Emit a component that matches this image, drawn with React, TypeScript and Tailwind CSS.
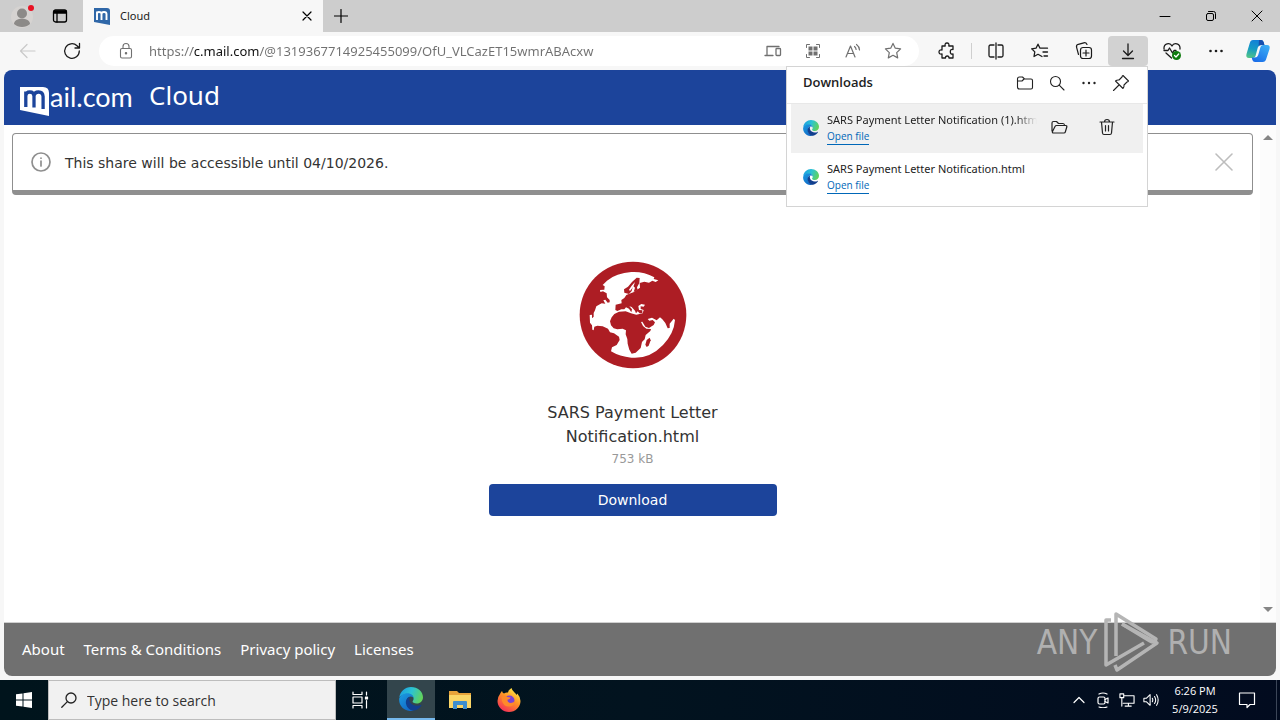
import React from 'react';
import type { ReactNode } from 'react';

const ui = "font-['Open_Sans','Noto_Sans',sans-serif]";
const noto = "font-['Noto_Sans',sans-serif]";
const web = "font-['DejaVu_Sans',sans-serif]";

type IconProps = { size?: number; box?: number; stroke?: number; className?: string; children: ReactNode };

function Icon({ size = 20, box = 20, stroke = 1.2, className = '', children }: IconProps) {
  return (
    <svg
      width={size}
      height={size}
      viewBox={`0 0 ${box} ${box}`}
      fill="none"
      stroke="currentColor"
      strokeWidth={stroke}
      strokeLinecap="round"
      strokeLinejoin="round"
      className={`shrink-0 ${className}`}
      aria-hidden="true"
    >
      {children}
    </svg>
  );
}

const starPath = 'M10 2.4l2.3 4.8 5.3.7-3.9 3.7 1 5.3L10 14.3l-4.7 2.6 1-5.3-3.9-3.7 5.3-.7z';

function EdgeLogo({ size, id }: { size: number; id: string }) {
  return (
    <svg width={size} height={size} viewBox="0 0 24 24" className="shrink-0" aria-hidden="true">
      <defs>
        <linearGradient id={`${id}-a`} x1="0" y1="0.2" x2="1" y2="0.5">
          <stop offset="0" stopColor="#1b9de2" />
          <stop offset="0.5" stopColor="#2cc3d2" />
          <stop offset="1" stopColor="#62d35a" />
        </linearGradient>
        <linearGradient id={`${id}-b`} x1="0" y1="0" x2="0.7" y2="1">
          <stop offset="0" stopColor="#1b9de2" />
          <stop offset="1" stopColor="#1267c4" />
        </linearGradient>
      </defs>
      <path fill={`url(#${id}-a)`} d="M.3 10.5C1.2 4.4 6.100 0 12 0c6.800 0 12 4.700 12 10.200 0 3.600-2.700 6.300-6.200 6.300-2.900 0-4.200-1.200-4.200-2 0-.7 1-1.100 1-2.800C14.600 8.700 12 7 8.600 7 4.800 7 2 8.400.3 10.500z" />
      <path fill={`url(#${id}-b)`} d="M.2 11.600C1.300 8.500 4.300 6.300 8.500 6.300c3.400 0 6.100 2.100 6.100 5.200-.2-1-1.500-1.900-2.900-1.900-2.800 0-4.500 2.600-4.200 5.500.4 4.600 4 8.400 7.500 8.500-7.900 2.200-15.600-3.900-14.800-12z" />
      <path fill="#123f8e" d="M10.900 9.700c-2.900 1-4.600 4-3.800 7.200.9 4 4.400 6.900 8 6.700 3.100-.8 5.700-2.700 7.300-5.200.3-.5-.2-.8-.7-.5-3.900 2-10.600.4-11.400-4.900-.2-1.300.1-2.400.6-3.300z" />
    </svg>
  );
}

function Tool({ label, active = false, children }: { label: string; active?: boolean; children: ReactNode }) {
  return (
    <button
      type="button"
      aria-label={label}
      className={`flex h-[30px] w-10 shrink-0 items-center justify-center rounded ${active ? 'bg-[#d2d2d2]' : ''}`}
    >
      {children}
    </button>
  );
}

function TabStrip() {
  return (
    <div className="flex h-8 shrink-0 items-stretch bg-[#cdcdcd]">
      <button type="button" aria-label="Profile" className="flex w-11 items-center justify-center">
        <svg width="28" height="28" viewBox="0 0 28 28" aria-hidden="true">
          <circle cx="14" cy="15" r="11" fill="#d6d3d1" />
          <circle cx="14" cy="11.500" r="5" fill="#8c8a88" />
          <path d="M6 22c0-7 16-7 16 0-4 4-12 4-16 0z" fill="#8c8a88" />
          <circle cx="23" cy="6" r="3" fill="#e81123" />
        </svg>
      </button>
      <button type="button" aria-label="Tab actions" className="flex w-8 items-center justify-center">
        <Icon size={16} box={16} stroke={1.3}>
          <rect x="1.500" y="2" width="13" height="12" rx="2" />
          <path d="M2 3h12v2H2z" fill="currentColor" />
          <path d="M5 5v9" />
        </Icon>
      </button>
      <div className="ml-[7px] flex w-60 items-center bg-[#f7f7f7] pl-[11px] pr-2">
        <svg width="16" height="17" viewBox="0 0 16 17" className="shrink-0" aria-hidden="true">
          <path d="M0 0h13q3 0 3 3v14L0 14z" fill="#2f67a8" />
          <path d="M3 12V3.500M3 5.500q0-1.500 2-1.500t2.500 1.500V12M7.500 6q0-2 2.500-2t2.500 2v6" stroke="#fff" strokeWidth="1.900" fill="none" />
        </svg>
        <span className={`ml-2.5 flex-1 text-[11px] text-[#1b1b1b] ${noto}`}>Cloud</span>
        <button type="button" aria-label="Close tab" className="flex size-4 items-center justify-center">
          <Icon size={10} box={10}>
            <path d="M1 1l8 8M9 1l-8 8" />
          </Icon>
        </button>
      </div>
      <button type="button" aria-label="New tab" className="flex w-9 items-center justify-center">
        <Icon size={14} box={14}>
          <path d="M7 .5v13M.5 7h13" />
        </Icon>
      </button>
      <div className="flex-1" />
      <button type="button" aria-label="Minimize" className="flex w-[46px] items-center justify-center">
        <Icon size={12} box={12} stroke={1}>
          <path d="M1 6.500h10" />
        </Icon>
      </button>
      <button type="button" aria-label="Restore" className="flex w-[46px] items-center justify-center">
        <Icon size={12} box={12} stroke={1}>
          <rect x="1.500" y="3.500" width="7" height="7" rx="1.500" />
          <path d="M3.500 1.500h5q2 0 2 2v5" />
        </Icon>
      </button>
      <button type="button" aria-label="Close" className="flex w-[46px] items-center justify-center">
        <Icon size={12} box={12} stroke={1}>
          <path d="M1 1l10 10M11 1L1 11" />
        </Icon>
      </button>
    </div>
  );
}

function Toolbar() {
  return (
    <div className="flex h-[38px] shrink-0 items-center bg-[#f7f7f7] pr-1">
      <button type="button" aria-label="Back" className="flex w-14 items-center justify-center text-[#c9c9c9]">
        <Icon size={18} box={18}>
          <path d="M16 9H2M8 2.500L1.500 9 8 15.500" />
        </Icon>
      </button>
      <button type="button" aria-label="Refresh" className="mr-[11px] flex w-8 items-center justify-center text-[#1b1b1b]">
        <Icon size={18} box={18} stroke={1.3}>
          <path d="M16.300 9A7.300 7.300 0 1 1 14 3.700L16.300 6M16.500 1.500V6h-4.500" />
        </Icon>
      </button>
      <div className="flex h-[30px] flex-1 items-center rounded-full bg-white pl-[18px] pr-1.5 text-[#707070]">
        <Icon size={18} box={18} stroke={1.1}>
          <rect x="3.500" y="6.500" width="11" height="9.500" rx="1.500" />
          <path d="M6 6.500V4.500q0-3 3-3t3 3v2" />
          <circle cx="9" cy="11.300" r=".7" fill="currentColor" />
        </Icon>
        <input
          aria-label="Address"
          defaultValue="https://c.mail.com/@1319367714925455099/OfU_VLCazET15wmrABAcxw"
          className={`ml-3.5 min-w-0 flex-1 bg-[linear-gradient(to_right,#707070_44px,#111_44px,#111_110px,#707070_110px)] bg-clip-text pt-0.5 text-[13px] text-transparent outline-none ${noto}`}
        />
        <Tool label="Send to devices">
          <Icon size={18} box={18} stroke={1.3}>
            <path d="M3 12.500V4.500h12M1 13.500h8" />
            <rect x="12" y="6.500" width="4.500" height="7" rx=".8" />
          </Icon>
        </Tool>
        <Tool label="QR code">
          <Icon size={18} box={18} stroke={1}>
            <path d="M2.500 5.500v-3h3M12.500 2.500h3v3M15.500 12.500v3h-3M5.500 15.500h-3v-3" />
            <path d="M4.500 4.500h4v4h-4zM9.500 4.500h4v4h-4zM4.500 9.500h4v4h-4zM9.500 9.500h4v4h-4z" fill="currentColor" stroke="none" />
          </Icon>
        </Tool>
        <Tool label="Read aloud">
          <Icon size={18} box={18} stroke={1.2}>
            <path d="M2 15L6.500 4 11 15M3.500 11.500h6M10.500 4.500q1.500 1.200 1.600 3M12.500 2.500q2.800 2 3 5.500" />
          </Icon>
        </Tool>
        <Tool label="Add to favorites">
          <Icon size={20}><path d={starPath} /></Icon>
        </Tool>
      </div>
      <div className="flex items-center gap-1 pl-2 text-[#1b1b1b]">
        <Tool label="Extensions">
          <Icon size={20} stroke={1.3}>
            <path d="M5 5h3.200Q7.500 2 10 2t1.800 3H16v3.500q-2.700-.6-2.700 2.200T16 13v4h-4q0-2-1.800-2T8.500 17H5v-4Q2 13.500 2 11t3-2z" />
          </Icon>
        </Tool>
        <div className="h-4 w-px bg-[#cfcfcf]" />
        <Tool label="Split screen">
          <Icon size={18} box={18} stroke={1.3}>
            <path d="M7 3H3.500Q2 3 2 4.500v9Q2 15 3.500 15H7M11 3h3.500Q16 3 16 4.500v9q0 1.500-1.500 1.500H11M9 1v16" />
          </Icon>
        </Tool>
        <Tool label="Favorites">
          <Icon size={20} stroke={1.3}>
            <path d="M12 15.500L8 13.300l-4 2.200.8-4.600L1.700 7.800l4.300-.6L8 3.200l2 4h7.500M13 11h4.500M14 15h3.500" />
          </Icon>
        </Tool>
        <Tool label="Collections">
          <Icon size={20} stroke={1.2}>
            <rect x="6.500" y="6.500" width="11" height="11" rx="2.500" />
            <path d="M12 9v6M9 12h6M4.500 13.500L2.600 6.300Q2 4 4.300 3.300l5.500-1.500Q12 1.300 13 3.500" />
          </Icon>
        </Tool>
        <Tool label="Downloads" active>
          <Icon size={20} stroke={1.3}>
            <path d="M10 3v11M5.500 10l4.500 4.500 4.500-4.500M4.500 17.500h11" />
          </Icon>
        </Tool>
        <Tool label="Browser essentials">
          <Icon size={20} stroke={1.3}>
            <path d="M2 8C1.500 2.500 8 1 10 5c2-4 8.500-2.500 8 3M2 9.500h4l1.500-2.500 3 5 1.500-2.500h2M4 12l5.500 5" />
            <circle cx="14.500" cy="14.500" r="4.500" fill="#0f7b0f" stroke="none" />
            <path d="M12.500 14.500l1.500 1.500 2.700-3" stroke="#fff" />
          </Icon>
        </Tool>
        <Tool label="Settings and more">
          <Icon size={18} box={18} stroke={0}>
            <g fill="currentColor">
              <circle cx="3.500" cy="9" r="1.300" />
              <circle cx="9" cy="9" r="1.300" />
              <circle cx="14.500" cy="9" r="1.300" />
            </g>
          </Icon>
        </Tool>
        <button type="button" aria-label="Copilot" className="flex w-9 justify-center">
          <svg width="26" height="26" viewBox="0 0 26 26" aria-hidden="true">
            <defs>
              <linearGradient id="cp1" x1="0.500" y1="0" x2="0.300" y2="1">
                <stop offset="0" stopColor="#1280d8" />
                <stop offset="0.500" stopColor="#159bc4" />
                <stop offset="1" stopColor="#52c487" />
              </linearGradient>
              <linearGradient id="cp2" x1="0.800" y1="0" x2="0.200" y2="1">
                <stop offset="0" stopColor="#3baef5" />
                <stop offset="1" stopColor="#1a6ce8" />
              </linearGradient>
            </defs>
            <path d="M8 2h8q2 0 2.600 2l.8 3h-3.200q-2.600 0-3.400 2.600L10.500 18q-.6 2-2.600 2H4q-3.500 0-2.500-4L4.800 5Q5.500 2 8 2z" fill="url(#cp1)" />
            <path d="M17.800 24H10q-2 0-2.600-2l-.7-2.500h3.100q2.600 0 3.400-2.600L15.500 9q.6-2 2.600-2H22q3.500 0 2.500 4l-3.300 10q-.8 3-3.400 3z" fill="url(#cp2)" />
            <path d="M14 2h2q2 0 2.600 2l.8 3h-3.200q-1.700 0-2.600 1z" fill="#174fae" />
          </svg>
        </button>
      </div>
    </div>
  );
}

const downloads = [
  { name: 'SARS Payment Letter Notification (1).html', hovered: true },
  { name: 'SARS Payment Letter Notification.html', hovered: false },
];

function DownloadsPanel() {
  return (
    <section
      aria-label="Downloads"
      className="absolute right-[132px] top-[66px] z-10 w-[362px] border border-[#d4d4d4] bg-white pb-1 text-[#222]"
    >
      <header className="flex h-[37px] items-center border-b border-[#e8e8e8] pb-1 pl-4 pr-2.5">
        <h2 className="flex-1 text-[13px] font-semibold">Downloads</h2>
        <button type="button" aria-label="Open downloads folder" className="flex w-8 justify-center">
          <Icon size={18} box={18} stroke={1.1}>
            <path d="M1.500 5q0-2 2-2h3l2 2H15q1.500 0 1.500 1.500v7Q16.500 15 15 15H3.500q-2 0-2-2zM1.500 7H6l2-2" />
          </Icon>
        </button>
        <button type="button" aria-label="Search downloads" className="flex w-8 justify-center">
          <Icon size={16} box={16} stroke={1.1}>
            <circle cx="6.500" cy="6.500" r="5" />
            <path d="M10.200 10.200L15 15" />
          </Icon>
        </button>
        <button type="button" aria-label="More options" className="flex w-8 justify-center">
          <Icon size={18} box={18} stroke={0}>
            <g fill="currentColor">
              <circle cx="3.500" cy="9" r="1.200" />
              <circle cx="9" cy="9" r="1.200" />
              <circle cx="14.500" cy="9" r="1.200" />
            </g>
          </Icon>
        </button>
        <button type="button" aria-label="Pin downloads" className="flex w-8 justify-center">
          <Icon size={18} box={18} stroke={1.1}>
            <path d="M11 1.500L16.500 7q-.5 1-1.500 1l-3 3q.3 2-1 3.500L3.500 7Q5 5.700 7 6l3-3q0-1 1-1.500zM7 11l-5.500 5.500" />
          </Icon>
        </button>
      </header>
      <ul className="px-1">
        {downloads.map((item, i) => (
          <li key={item.name} className={`flex h-[49px] items-center pb-px pl-3 ${item.hovered ? 'bg-[#f0f0f0]' : ''}`}>
            <EdgeLogo size={16} id={`dl${i}`} />
            <div className="ml-2 w-[210px] overflow-hidden">
              <div
                className={`whitespace-nowrap text-[11px] leading-4 ${noto} ${
                  item.hovered ? '[mask-image:linear-gradient(to_right,black_90%,transparent)]' : ''
                }`}
              >
                {item.name}
              </div>
              <a href="#open" className="block w-fit border-b border-[#0067b8] text-[10px] leading-4 text-[#0067b8]">
                Open file
              </a>
            </div>
            {item.hovered && (
              <div className="flex flex-1 pb-0.5">
                <button type="button" aria-label="Show in folder" className="flex w-11 justify-center">
                  <Icon size={18} box={18} stroke={1.2}>
                    <path d="M2 13V5q0-1.500 1.500-1.500h3l2 2H13q1.500 0 1.500 2M3.500 15H14q1 0 1.300-1l1.500-5q.3-1.500-1-1.500H6.500q-1 0-1.500 1l-2.500 5Q2 15 3.500 15z" />
                  </Icon>
                </button>
                <button type="button" aria-label="Delete file" className="ml-1 flex w-11 justify-center">
                  <Icon size={18} box={18} stroke={1.2}>
                    <path d="M2 4h14M6.500 4q0-2.500 2.500-2.500T11.500 4M3.500 4l1 11q.2 1.500 1.500 1.500h6q1.300 0 1.500-1.500l1-11M7.500 7.500v5.500M10.500 7.500v5.500" />
                  </Icon>
                </button>
              </div>
            )}
          </li>
        ))}
      </ul>
    </section>
  );
}

function MailLogo() {
  return (
    <svg width="113" height="32" viewBox="0 0 113 32" className="overflow-visible" role="img" aria-label="mail.com">
      <path d="M0 2h23q6 0 6 6v23L0 25z" fill="#fff" />
      <path
        d="M5.800 22V6.500M5.800 11q0-4 4-4t4.200 4V22.500M14 11q.4-4 4.600-4t4.500 4.500V24"
        stroke="#1c449b"
        strokeWidth="3.300"
        fill="none"
      />
      <text x="30" y="22" fontSize="27" fill="#fff" fontFamily="Lato, sans-serif">ail.com</text>
    </svg>
  );
}

function Globe() {
  return (
    <svg width="108" height="108" viewBox="298 33 324 324" aria-hidden="true">
      <circle cx="460" cy="195" r="160" fill="#ad1d24" />
      <path
        fill="#fff"
        d="M369 105L382 92Q410 69 455 66Q492 64 524 82L522 87L536 91L528 96L518 92L508 98L494 95L480 99L481 113L471 120L463 126L453 130L440 135L434 144L425 150L426 160L408 164L407 180L413 183L425 178L434 178L439 172L448 176L455 187L457 178L449 169L456 171L466 182L469 190L474 184L480 190L488 189L488 181L478 180L476 168L485 162L496 164L492 170L483 169L483 177L492 180L489 190L470 194L454 190L438 184L418 185L404 192L396 202L391 214L394 226L402 235L413 238L429 236L439 241L438 253L443 267L444 281L449 299L456 311L468 308L483 294L487 276L495 268L498 255L512 243L514 237L500 236L490 228L484 216L488 215L497 230L508 234L522 225L526 217L519 210L509 212L504 207L517 203L531 211L541 202L548 208L557 219L564 235L570 234L570 221L582 206L586 210Q583 251 550 285Q509 328 455 323Q420 320 394 304L397 292L411 285L420 270L418 260L403 250L391 247L385 236L369 229L353 227L344 230L342 241L338 239L337 226L331 218L330 195L337 194L337 205L342 200L342 189L346 181L350 169L366 160L377 161L371 151L377 149L384 158L390 157L390 150L382 142L381 130L370 124L362 126L361 120L374 119L375 109Z"
      />
      <path fill="#ad1d24" d="M471 83L480 84L479 99L472 112L474 120L462 126L466 113L460 108L456 123L448 132L434 128L433 118L445 110L457 96Z" />
      <path fill="#fff" d="M466 96L461 110L451 123L448 119L456 107Z" />
      <path fill="#ad1d24" d="M510 263L513 271L507 287L501 291L497 284L501 270Z" />
    </svg>
  );
}

function Watermark() {
  return (
    <div
      aria-hidden="true"
      className="pointer-events-none absolute bottom-[46px] right-12 flex items-center gap-1.5 font-['DejaVu_Sans_Condensed','DejaVu_Sans',sans-serif] text-[33px] leading-none text-[#b0b0b0]"
    >
      <span>ANY</span>
      <svg width="58" height="64" viewBox="0 0 58 64" fill="none" stroke="#b5b5b5" strokeWidth="3.500" strokeLinejoin="round">
        <path d="M13 46V4l40 25q-1 5-6 2L19 14" />
        <path d="M8 10H3v45l38-22M19 14l35 19L14 60l-2-5" />
      </svg>
      <span>RUN</span>
    </div>
  );
}

function Page() {
  return (
    <div className={`mx-1 mb-1 flex flex-1 flex-col overflow-hidden rounded-lg bg-white ${web}`}>
      <header className="flex h-[55px] shrink-0 items-center bg-[#1c449b] px-4 text-white">
        <div className="pt-1.5"><MailLogo /></div>
        <h1 className={`ml-4 pb-1.5 text-[26px] leading-10 ${noto}`}>Cloud</h1>
      </header>
      <div className="flex flex-1">
        <main className="flex-1 pl-2 pr-[7px] pt-2">
          <div
            role="status"
            className="flex h-[62px] items-center rounded border border-b-[5px] border-[#8f8f8f] px-[18px] text-sm text-[#333]"
          >
            <Icon size={20} box={20} stroke={1.700} className="text-[#8f8f8f]">
              <circle cx="10" cy="10" r="9" />
              <path d="M10 9v5M10 6v.2" />
            </Icon>
            <p className="ml-3.5 flex-1 pt-0.5">This share will be accessible until 04/10/2026.</p>
            <button type="button" aria-label="Dismiss" className="text-[#bdbdbd]">
              <Icon size={20} box={20} stroke={1.600}>
                <path d="M2 2l16 16M18 2L2 18" />
              </Icon>
            </button>
          </div>
          <section className="mx-auto flex w-72 flex-col items-center pt-[66px] text-center">
            <Globe />
            <h2 className="mt-8 w-52 text-base font-normal leading-6 text-[#333]">SARS Payment Letter Notification.html</h2>
            <p className="text-xs leading-5 text-[#999]">753 kB</p>
            <button type="button" className="mt-[15px] h-8 w-full rounded bg-[#1c449b] text-sm text-white">
              Download
            </button>
          </section>
        </main>
        <div className="flex w-4 flex-col items-center justify-between bg-[#fcfcfc] py-2.5 text-[#858585]">
          <svg width="10" height="5" viewBox="0 0 10 5" aria-hidden="true"><path d="M0 5l5-5 5 5z" fill="currentColor" /></svg>
          <svg width="10" height="5" viewBox="0 0 10 5" aria-hidden="true"><path d="M0 0l5 5 5-5z" fill="currentColor" /></svg>
        </div>
      </div>
      <footer className={`h-[54px] shrink-0 border-t border-[#d0d0d0] bg-[#707070] px-[18px] text-[15px] leading-[52px] text-white ${noto}`}>
        <nav className="flex gap-[19px]">
          <a href="#about">About</a>
          <a href="#terms">Terms &amp; Conditions</a>
          <a href="#privacy">Privacy policy</a>
          <a href="#licenses">Licenses</a>
        </nav>
      </footer>
    </div>
  );
}

function Taskbar() {
  return (
    <div className="flex h-10 shrink-0 items-stretch bg-gradient-to-r from-[#00141c] via-[#02131f] to-[#020b1f] text-white">
      <button type="button" aria-label="Start" className="flex w-12 items-center justify-center">
        <svg width="16" height="16" viewBox="0 0 16 16" fill="#fff" aria-hidden="true">
          <path d="M0 2.300L6.500 1.400V7.500H0zM7.500 1.200L16 0v7.500H7.500zM0 8.500h6.500v6.100L0 13.700zM7.500 8.500H16V16l-8.500-1.200z" />
        </svg>
      </button>
      <div className="flex w-72 items-center border border-[#bdbdbd] bg-[#f1f1f1] pl-3 text-[#222]">
        <Icon size={16} box={16} stroke={1.300}>
          <circle cx="10" cy="6" r="5" />
          <path d="M6.400 9.600L.8 15.200" />
        </Icon>
        <input
          aria-label="Search"
          placeholder="Type here to search"
          className="ml-2.5 w-full bg-transparent pt-0.5 text-sm outline-none placeholder:text-[#333]"
        />
      </div>
      <button type="button" aria-label="Task view" className="mr-1 flex w-[47px] items-center justify-center">
        <Icon size={18} box={18} stroke={1.200}>
          <path d="M2 1v2.500h9V1M2 17v-2.500h9V17M15.500 1v3M15.500 9.500V17" />
          <rect x="2" y="6" width="9" height="6" />
          <rect x="14.500" y="6" width="2" height="2" fill="currentColor" />
        </Icon>
      </button>
      <button type="button" aria-label="Microsoft Edge" className="flex w-12 items-center justify-center border-b-2 border-[#76b9ed] bg-[#33454c]">
        <EdgeLogo size={24} id="task" />
      </button>
      <button type="button" aria-label="File Explorer" className="flex w-[49px] items-center justify-center">
        <svg width="22" height="20" viewBox="0 0 22 20" aria-hidden="true">
          <path d="M0 1h8l2 2h12v15H0z" fill="#e8a33a" />
          <path d="M0 5h22v13H0z" fill="#fbd667" />
          <path d="M4 19v-7q0-1 1-1h12q1 0 1 1v7h-4v-4H8v4z" fill="#3e8fd0" />
        </svg>
      </button>
      <button type="button" aria-label="Firefox" className="flex w-[49px] items-center justify-center">
        <svg width="24" height="24" viewBox="0 0 24 24" aria-hidden="true">
          <defs>
            <linearGradient id="ff" x1="0.800" y1="0" x2="0.200" y2="1">
              <stop offset="0" stopColor="#fff24a" />
              <stop offset="0.450" stopColor="#ff9226" />
              <stop offset="1" stopColor="#f4275c" />
            </linearGradient>
          </defs>
          <path d="M3 6q1-2 2-3 .5 2 2 2.500Q9 4 11 4.500 11.500 1.500 14.500 0q.5 2.500 3 4.500 1.500 1 2 2.500l.8-1.500Q23.500 9 23.500 13A11.500 11 0 0 1 .5 13Q.500 9 3 6z" fill="url(#ff)" />
          <circle cx="12.500" cy="12.500" r="5" fill="#7a42d6" />
          <path d="M4.500 9q3-2 6 0l3 .5q0 1.500-3 2.200-.5 3 3.500 3.300 3-.5 4-2.500-.5 6-6 6T5 13z" fill="#ff8a2a" />
        </svg>
      </button>
      <div className="flex-1" />
      <div className="flex items-center gap-2 pr-3">
        <Icon size={16} box={16} stroke={1.200}><path d="M3 10.500l5-5 5 5" /></Icon>
        <Icon size={16} box={16} stroke={1.200}>
          <rect x="3" y="5" width="7" height="7" rx="1.500" />
          <path d="M10 7.500l3-1.500v5l-3-1.500M4 2q4-2 8 0M4 15q4 1.500 8 0" />
        </Icon>
        <Icon size={16} box={17} stroke={1.200}>
          <path d="M5 4h11v8H4.500M10 12v3M6.500 15H13M1 2h4v4H1zM3 6v9" />
        </Icon>
        <Icon size={16} box={18} stroke={1.200}>
          <path d="M1 7h3l4-4v12l-4-4H1zM10.500 7q1 2 0 4M13 5q2.500 4 0 8M15.300 3q3.500 6 0 12" />
        </Icon>
      </div>
      <div className={`flex w-12 flex-col justify-center whitespace-nowrap text-center text-[11px] leading-[18px] ${ui}`}>
        <span>6:26 PM</span>
        <span>5/9/2025</span>
      </div>
      <button type="button" aria-label="Notifications" className="ml-1.5 flex w-11 items-center justify-center">
        <Icon size={18} box={18} stroke={1.200}>
          <path d="M1.500 2h15v11.500H12l-3 3v-3H1.500z" />
        </Icon>
      </button>
      <div className="ml-[7px] w-1 border-l border-[#3c4658]" />
    </div>
  );
}

export default function App() {
  return (
    <div className={`relative flex min-h-screen flex-col bg-[#f7f7f7] ${ui}`}>
      <TabStrip />
      <Toolbar />
      <Page />
      <Taskbar />
      <DownloadsPanel />
      <Watermark />
    </div>
  );
}
